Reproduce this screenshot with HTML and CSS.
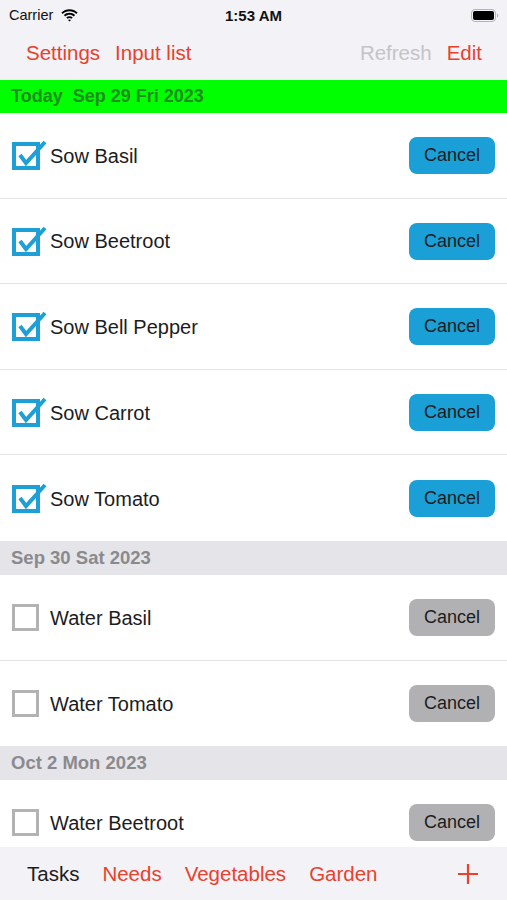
FILE: index.html
```html
<!DOCTYPE html>
<html>
<head>
<meta charset="utf-8">
<link rel="stylesheet" href="styles.css">
</head>
<body>
<div class="screen">
  <div class="status">
    <div class="status-left">Carrier
      <svg class="wifi" width="17" height="13" viewBox="0 0 17 13"><path d="M8.5 2.2c2.6 0 5 1 6.8 2.7l1.3-1.4C14.4 1.4 11.6.2 8.5.2S2.6 1.4.4 3.5l1.3 1.4C3.5 3.2 5.9 2.2 8.5 2.2z" fill="#000"/><path d="M8.5 5.7c1.6 0 3.1.6 4.3 1.7l1.3-1.4C12.6 4.6 10.6 3.8 8.5 3.8S4.4 4.6 2.9 6l1.3 1.4c1.2-1.1 2.7-1.7 4.3-1.7z" fill="#000"/><path d="M8.5 9.1c.7 0 1.4.3 1.9.7l1.3-1.4c-.9-.8-2-1.2-3.2-1.2s-2.300.4-3.2 1.2l1.3 1.4c.5-.4 1.2-.7 1.9-.7z" fill="#000"/><path d="M8.5 12.6l1.5-1.6c-.4-.3-.9-.5-1.5-.5s-1.1.2-1.5.5z" fill="#000"/></svg>
    </div>
    <div class="status-time">1:53 AM</div>
    <div class="status-right">
      <svg width="28" height="13" viewBox="0 0 28 13"><rect x="0.5" y="0.5" width="24" height="12" rx="3.5" fill="none" stroke="#b5b5b5"/><rect x="2" y="2" width="21" height="9" rx="2" fill="#000"/><path d="M26 4.5v4c.8-.3 1.3-1 1.3-2s-.5-1.700-1.300-2z" fill="#b5b5b5"/></svg>
    </div>
  </div>
  <div class="navbar">
    <div class="nav-group">
      <span class="nav-link">Settings</span>
      <span class="nav-link">Input list</span>
    </div>
    <div class="nav-group">
      <span class="nav-link disabled">Refresh</span>
      <span class="nav-link">Edit</span>
    </div>
  </div>
  <div class="list">
    <div class="section-header today">Today&nbsp; Sep 29 Fri 2023</div>
    <div class="row">
      <span class="check checked"><svg width="36" height="32" viewBox="0 0 36 32"><rect x="2" y="6" width="24" height="24" fill="none" stroke="#1ea0d6" stroke-width="4"/><path d="M8 17l6 8L33 4" fill="none" stroke="#1ea0d6" stroke-width="4"/></svg></span>
      <span class="label">Sow Basil</span>
      <span class="btn blue">Cancel</span>
    </div>
    <div class="row">
      <span class="check checked"><svg width="36" height="32" viewBox="0 0 36 32"><rect x="2" y="6" width="24" height="24" fill="none" stroke="#1ea0d6" stroke-width="4"/><path d="M8 17l6 8L33 4" fill="none" stroke="#1ea0d6" stroke-width="4"/></svg></span>
      <span class="label">Sow Beetroot</span>
      <span class="btn blue">Cancel</span>
    </div>
    <div class="row">
      <span class="check checked"><svg width="36" height="32" viewBox="0 0 36 32"><rect x="2" y="6" width="24" height="24" fill="none" stroke="#1ea0d6" stroke-width="4"/><path d="M8 17l6 8L33 4" fill="none" stroke="#1ea0d6" stroke-width="4"/></svg></span>
      <span class="label">Sow Bell Pepper</span>
      <span class="btn blue">Cancel</span>
    </div>
    <div class="row">
      <span class="check checked"><svg width="36" height="32" viewBox="0 0 36 32"><rect x="2" y="6" width="24" height="24" fill="none" stroke="#1ea0d6" stroke-width="4"/><path d="M8 17l6 8L33 4" fill="none" stroke="#1ea0d6" stroke-width="4"/></svg></span>
      <span class="label">Sow Carrot</span>
      <span class="btn blue">Cancel</span>
    </div>
    <div class="row last">
      <span class="check checked"><svg width="36" height="32" viewBox="0 0 36 32"><rect x="2" y="6" width="24" height="24" fill="none" stroke="#1ea0d6" stroke-width="4"/><path d="M8 17l6 8L33 4" fill="none" stroke="#1ea0d6" stroke-width="4"/></svg></span>
      <span class="label">Sow Tomato</span>
      <span class="btn blue">Cancel</span>
    </div>
    <div class="section-header">Sep 30 Sat 2023</div>
    <div class="row">
      <span class="check"><span class="box"></span></span>
      <span class="label">Water Basil</span>
      <span class="btn gray">Cancel</span>
    </div>
    <div class="row last">
      <span class="check"><span class="box"></span></span>
      <span class="label">Water Tomato</span>
      <span class="btn gray">Cancel</span>
    </div>
    <div class="section-header">Oct 2 Mon 2023</div>
    <div class="row">
      <span class="check"><span class="box"></span></span>
      <span class="label">Water Beetroot</span>
      <span class="btn gray">Cancel</span>
    </div>
  </div>
  <div class="tabbar">
    <span class="tab active">Tasks</span>
    <span class="tab">Needs</span>
    <span class="tab">Vegetables</span>
    <span class="tab">Garden</span>
    <span class="tab-plus"><svg width="22" height="22" viewBox="0 0 22 22"><path d="M11 1v20M1 11h20" stroke="#e8412c" stroke-width="2.2"/></svg></span>
  </div>
</div>
</body>
</html>
```
FILE: styles.css
```css
* { box-sizing: border-box; }
html, body { margin: 0; padding: 0; }
body {
  font-family: "Liberation Sans", Arial, sans-serif;
  background: #fff;
  color: #1c1c1e;
}
.screen {
  width: 507px;
  height: 900px;
  display: flex;
  flex-direction: column;
  overflow: hidden;
}
.status {
  height: 32px;
  background: #f2f2f7;
  display: flex;
  align-items: center;
  justify-content: space-between;
  padding: 0 8px 2px 9px;
  position: relative;
}
.status-left {
  font-size: 14.5px;
  display: flex;
  align-items: center;
  gap: 8px;
  color: #111;
}
.status-time {
  position: absolute;
  left: 0;
  right: 0;
  text-align: center;
  font-size: 15px;
  font-weight: bold;
  color: #111;
  pointer-events: none;
}
.status-right { display: flex; align-items: center; }
.navbar {
  height: 48px;
  background: #f2f2f7;
  display: flex;
  align-items: center;
  justify-content: space-between;
  padding: 0 25px 7px 26px;
}
.nav-group { display: flex; gap: 15px; }
.nav-link {
  font-size: 20.5px;
  color: #e8412c;
}
.nav-link.disabled { color: #c4c4c7; }
.list {
  flex: 1;
  overflow: hidden;
  display: flex;
  flex-direction: column;
}
.section-header {
  height: 34px;
  flex: none;
  background: #e4e4e9;
  color: #8a8a8e;
  font-size: 18.5px;
  font-weight: bold;
  display: flex;
  align-items: center;
  padding-left: 11px;
}
.section-header.today {
  height: 33px;
  background: #00ff00;
  color: #1e8e1e;
  font-size: 18px;
}
.row {
  height: 85.6px;
  flex: none;
  display: flex;
  align-items: center;
  padding: 0 12px 0 12px;
  border-bottom: 1px solid #e3e3e6;
}
.row.last { border-bottom: none; }
.check {
  width: 38px;
  display: flex;
  align-items: center;
  flex: none;
}
.check svg { margin-left: 0; margin-top: -2px; }
.box {
  display: block;
  width: 27px;
  height: 27px;
  border: 3.5px solid #b3b3b3;
}
.label {
  flex: 1;
  font-size: 20px;
  color: #1c1c1e;
  padding-top: 2px;
}
.btn {
  width: 86px;
  height: 37px;
  border-radius: 8px;
  display: flex;
  align-items: center;
  justify-content: center;
  font-size: 18px;
  color: #1c1c1e;
  margin-top: 1px;
}
.btn.blue { background: #1a9fd7; }
.btn.gray { background: #b1b1b3; }
.tabbar {
  height: 53px;
  flex: none;
  background: #f2f2f7;
  display: flex;
  align-items: center;
  padding: 0 28px 0 27px;
  gap: 23px;
}
.tab {
  font-size: 20.5px;
  color: #e8412c;
}
.tab.active { color: #1c1c1e; }
.tab-plus { margin-left: auto; display: flex; }
```
